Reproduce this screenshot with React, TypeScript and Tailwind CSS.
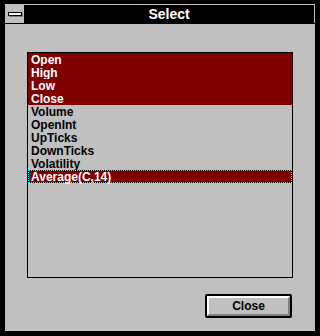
import React from "react";

const items = [
  { label: "Open", selected: true },
  { label: "High", selected: true },
  { label: "Low", selected: true },
  { label: "Close", selected: true },
  { label: "Volume", selected: false },
  { label: "OpenInt", selected: false },
  { label: "UpTicks", selected: false },
  { label: "DownTicks", selected: false },
  { label: "Volatility", selected: false },
  { label: "Average(C,14)", selected: true, focused: true },
];

const font = { fontFamily: '"Liberation Sans", Arial, sans-serif' };

const App = () => {
  return (
    <div
      className="w-[320px] h-[336px] bg-black pt-[4px] px-[5px] pb-[5px] flex flex-col"
      style={font}
    >
      {/* title bar */}
      <div className="flex h-[20px] border-b border-black">
        <div className="w-[19px] h-[19px] bg-[#c0c0c0] pl-[3px] pt-[8px]">
          <div className="w-[14px] h-[4px] border border-black bg-white shadow-[1px_1px_0_#808080]" />
        </div>
        <div className="flex-1 h-[19px] bg-black border-t border-r border-[#c0c0c0] flex items-center justify-center">
          <span className="text-white font-bold text-[14px] leading-none">Select</span>
        </div>
      </div>

      {/* client area */}
      <div className="flex-1 bg-[#c0c0c0] pt-[28px] px-[22px] flex flex-col">
        <div className="h-[226px] border border-black flex flex-col">
          {items.map((item) =>
            item.focused ? (
              <div
                key={item.label}
                className="h-[13px] border border-dotted border-[#00ffff] bg-black"
              >
                <div className="h-full bg-[#800000] text-white font-bold text-[12px] leading-[12px] pl-[2px] whitespace-nowrap">
                  {item.label}
                </div>
              </div>
            ) : (
              <div
                key={item.label}
                className={
                  "h-[13px] font-bold text-[12px] leading-[14px] pl-[3px] whitespace-nowrap " +
                  (item.selected ? "bg-[#800000] text-white" : "text-black")
                }
              >
                {item.label}
              </div>
            )
          )}
        </div>

        <div className="flex justify-end mt-[16px] mr-[1px]">
          <button className="w-[87px] h-[24px] border-2 border-black rounded-[2px] bg-[#c0c0c0] p-0">
            <div className="h-full w-full border-t-2 border-l-2 border-white border-r-2 border-b-2 border-r-[#808080] border-b-[#808080] flex items-center justify-center">
              <span className="font-bold text-[12px] leading-none text-black">Close</span>
            </div>
          </button>
        </div>
      </div>
    </div>
  );
};

export default App;
